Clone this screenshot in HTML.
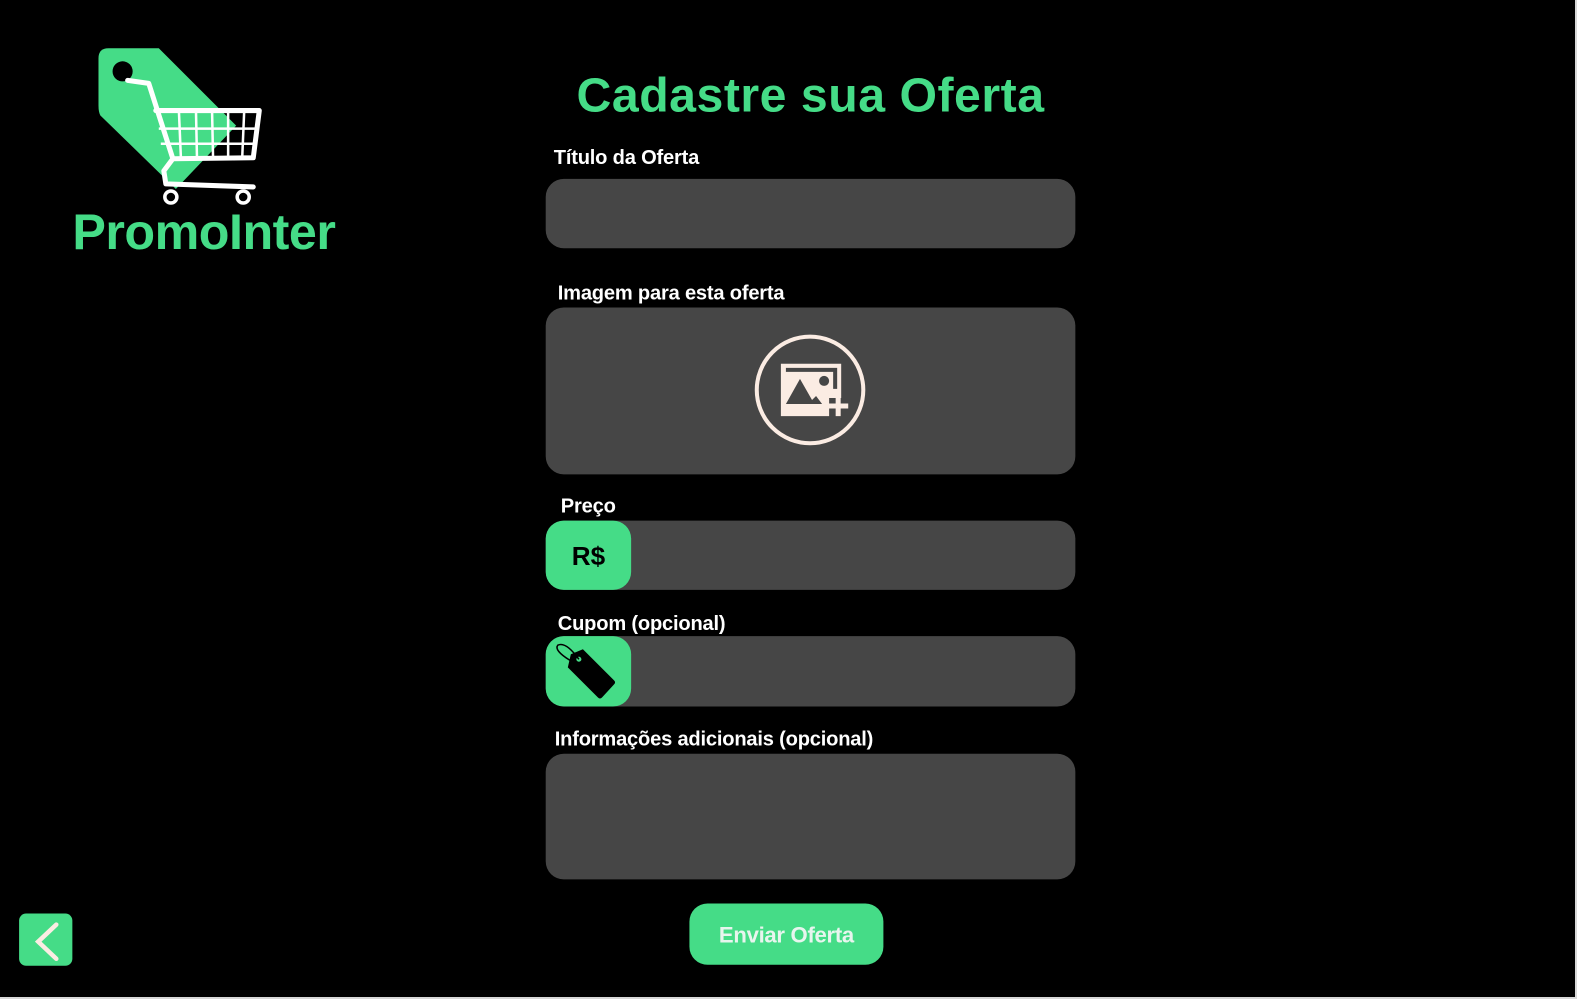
<!DOCTYPE html>
<html><head><meta charset="utf-8"><style>
html,body{margin:0;padding:0;background:#d8d8d8;width:1577px;height:999px;overflow:hidden}
#p{position:absolute;left:0;top:0;width:1575px;height:997px;background:#000;font-family:"Liberation Sans",sans-serif;overflow:hidden}
#s{position:absolute;left:0;top:0;width:1567px;height:993px;transform:scale(1.005);transform-origin:0 0}
.t{position:absolute;color:#fff;font-weight:bold;font-size:20px;letter-spacing:-0.2px}
.f{position:absolute;left:543px;width:527px;background:#464646;border-radius:18px}
.g{position:absolute;background:#45dc87}
</style></head><body><div id="p"><div id="s">
<svg style="position:absolute;left:60px;top:30px" width="300" height="180" viewBox="60 30 300 180">
<path d="M108 48 L158 48 L235 125 L175 188 L100 115 Q98 112 98 105 L98 58 Q98 48 108 48Z" fill="#45dc87"/>
<circle cx="122" cy="71" r="10" fill="#000"/>
<g fill="none" stroke="#fff" stroke-width="5" stroke-linecap="round" stroke-linejoin="round">
<path d="M127 80 L148 83 L172 158 L163 170 L165 183 L252 186"/>
<path d="M155 110 L258 110 L252 157 L172 158"/>
</g>
<g stroke="#fff" stroke-width="2.5">
<path d="M158 128 L255 128 M160 143 L253 143 M178 110 L180 157 M195 110 L196 157 M211 110 L212 157 M227 110 L227 157 M243 110 L241 157"/>
</g>
<circle cx="170" cy="196" r="6" fill="none" stroke="#fff" stroke-width="3.5"/>
<circle cx="242" cy="196" r="6" fill="none" stroke="#fff" stroke-width="3.5"/>
</svg>
<div style="position:absolute;left:72px;top:202px;font-size:50px;font-weight:bold;color:#45dc87;letter-spacing:-0.5px">PromoInter</div>
<div style="position:absolute;left:543px;width:527px;top:68px;text-align:center;font-size:48px;font-weight:bold;color:#45dc87;letter-spacing:0.5px">Cadastre sua Oferta</div>
<div class="t" style="left:551px;top:146px">Título da Oferta</div>
<div class="f" style="top:178px;height:69px"></div>
<div class="t" style="left:555px;top:281px">Imagem para esta oferta</div>
<div class="f" style="top:306px;height:166px"></div>
<svg style="position:absolute;left:750px;top:332px" width="112" height="112" viewBox="0 0 112 112">
<circle cx="56" cy="56" r="53" fill="none" stroke="#fbece3" stroke-width="4"/>
<path d="M27 30 H87 V64 H75 V82 H27Z" fill="#fbece3"/>
<path d="M32 70 L46 45 L58 66 L62 62 L68 70Z" fill="#464646"/>
<circle cx="70" cy="47" r="5" fill="#464646"/>
<path d="M32 36 H81 V55" fill="none" stroke="#464646" stroke-width="4"/>
<path d="M84 62 V82 M74 72 H94" stroke="#fbece3" stroke-width="5"/>
</svg>
<div class="t" style="left:558px;top:493px">Preço</div>
<div class="f" style="top:518px;height:69px"></div>
<div class="g" style="left:543px;top:518px;width:85px;height:69px;border-radius:18px;font-weight:bold;font-size:26px;line-height:71px;text-align:center;color:#000">R$</div>
<div class="t" style="left:555px;top:610px">Cupom (opcional)</div>
<div class="f" style="top:633px;height:70px"></div>
<div class="g" style="left:543px;top:633px;width:85px;height:70px;border-radius:18px"></div>
<svg style="position:absolute;left:543px;top:633px" width="85" height="70" viewBox="0 0 85 70">
<path d="M25 18 L37 13 L68 44 Q70 46 68 48 L56 61 Q54 63 52 61 L22 31Z" fill="#000"/>
<circle cx="33" cy="23" r="2.5" fill="#45dc87"/>
<path d="M33 23 Q20 5 12 9 Q8 14 24 24" fill="none" stroke="#000" stroke-width="1.5"/>
</svg>
<div class="t" style="left:552px;top:725px">Informações adicionais (opcional)</div>
<div class="f" style="top:750px;height:125px"></div>
<div class="g" style="left:686px;top:899px;width:193px;height:61px;border-radius:18px;color:#e8f5ee;font-weight:bold;font-size:22px;line-height:63px;text-align:center;letter-spacing:-0.3px">Enviar Oferta</div>
<div class="g" style="left:19px;top:909px;width:53px;height:52px;border-radius:7px"></div>
<svg style="position:absolute;left:19px;top:909px" width="53" height="52"><path d="M37 11 L19 28 L37 45" fill="none" stroke="#fbece3" stroke-width="4.5" stroke-linecap="round"/></svg>
</div></div></body></html>
